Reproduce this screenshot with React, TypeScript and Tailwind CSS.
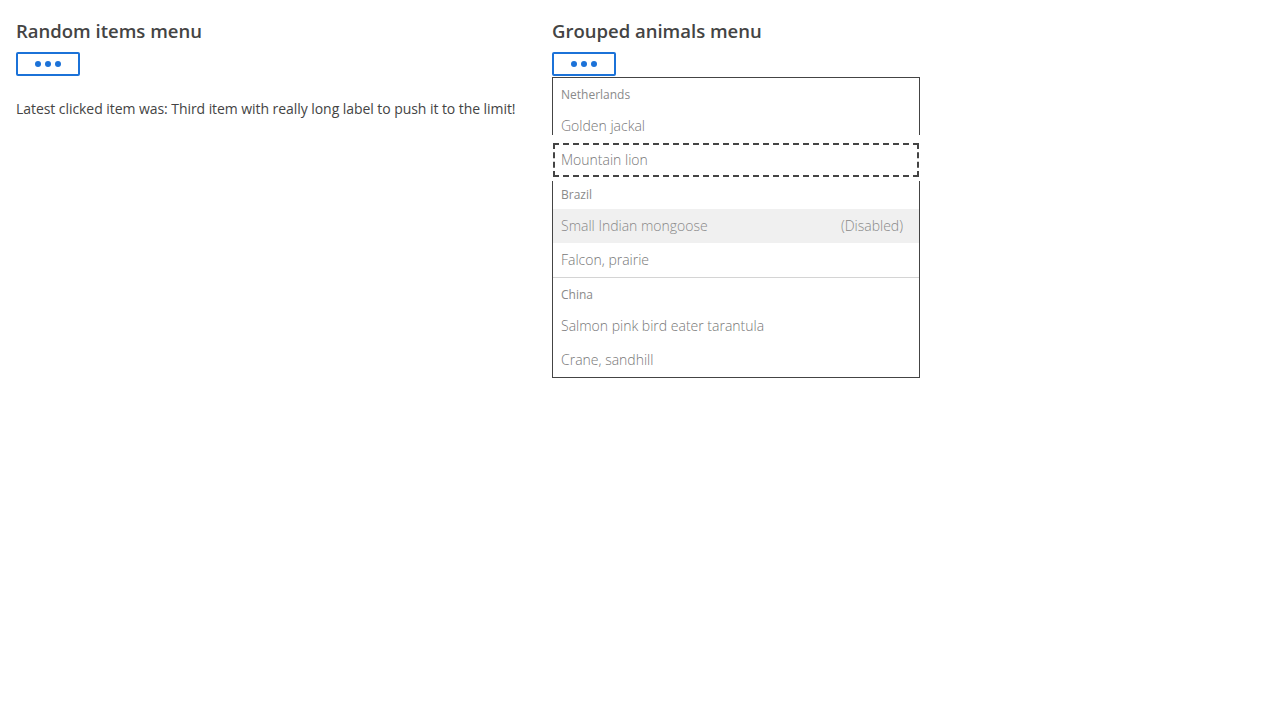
const FONT = "font-['Open_Sans',sans-serif]";

type Item = { label: string; disabled?: boolean; focused?: boolean };
type Group = { name: string; items: Item[] };

const groups: Group[] = [
  {
    name: "Netherlands",
    items: [{ label: "Golden jackal" }, { label: "Mountain lion", focused: true }],
  },
  {
    name: "Brazil",
    items: [{ label: "Small Indian mongoose", disabled: true }, { label: "Falcon, prairie" }],
  },
  {
    name: "China",
    items: [{ label: "Salmon pink bird eater tarantula" }, { label: "Crane, sandhill" }],
  },
];

function MoreButton() {
  return (
    <button
      type="button"
      className="flex h-6 w-16 items-center justify-center gap-1 rounded-[2px] border-2 border-[#1b72d8] bg-white"
    >
      <span className="h-[6px] w-[6px] rounded-full bg-[#1b72d8]" />
      <span className="h-[6px] w-[6px] rounded-full bg-[#1b72d8]" />
      <span className="h-[6px] w-[6px] rounded-full bg-[#1b72d8]" />
    </button>
  );
}

function MenuItem({ item }: { item: Item }) {
  if (item.focused) {
    return (
      <div className="relative z-10 flex h-[34px] items-center border-2 border-dashed border-[#444] bg-white px-[6px] pb-px text-[14px] font-light text-[#777] shadow-[0_-2px_0_6px_#fff]">
        {item.label}
      </div>
    );
  }
  if (item.disabled) {
    return (
      <div className="flex h-[34px] items-center justify-between bg-[#f0f0f0] pl-2 pr-4 pb-px text-[14px] font-light text-[#888]">
        <span>{item.label}</span>
        <span>(Disabled)</span>
      </div>
    );
  }
  return (
    <div className="flex h-[34px] items-center px-2 pb-px text-[14px] font-light text-[#777]">
      {item.label}
    </div>
  );
}

function GroupedMenu() {
  return (
    <div className="mt-px w-[368px] border border-[#444] bg-white">
      {groups.map((g, i) => (
        <div key={g.name} className={i > 0 ? "border-t border-[#d4d4d4]" : ""}>
          <div className="flex h-[31px] items-end px-2 pb-[5px] text-[12px] text-[#8a8a8a]">
            {g.name}
          </div>
          {g.items.map((item) => (
            <MenuItem key={item.label} item={item} />
          ))}
        </div>
      ))}
    </div>
  );
}

export default function App() {
  return (
    <div className={`min-h-screen bg-white p-4 ${FONT}`}>
      <div className="flex">
        <div className="w-[536px]">
          <h2 className="pt-px text-[18.5px] font-semibold leading-[27px] text-[#444]">Random items menu</h2>
          <div className="mt-2">
            <MoreButton />
          </div>
          <p className="mt-[23px] text-[14px] leading-5 tracking-[-0.06px] text-[#444]">
            Latest clicked item was: Third item with really long label to push it to the limit!
          </p>
        </div>
        <div>
          <h2 className="pt-px text-[18.5px] font-semibold leading-[27px] text-[#444]">Grouped animals menu</h2>
          <div className="mt-2">
            <MoreButton />
          </div>
          <GroupedMenu />
        </div>
      </div>
    </div>
  );
}
